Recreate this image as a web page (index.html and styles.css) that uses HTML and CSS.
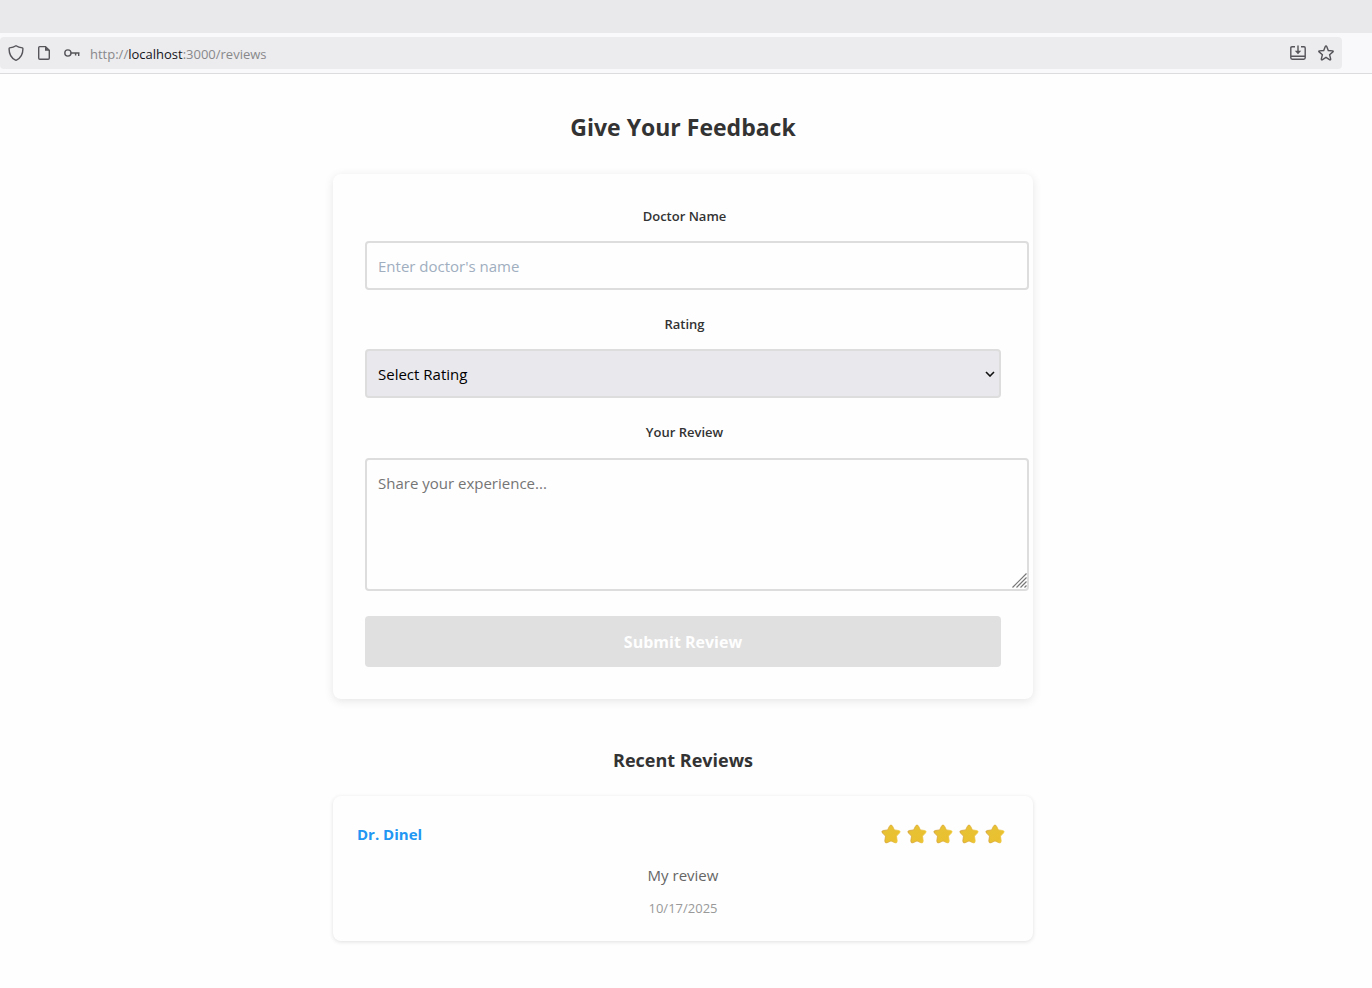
FILE: index.html
```html
<!DOCTYPE html>
<html lang="en">
<head>
<meta charset="utf-8">
<meta name="viewport" content="width=device-width, initial-scale=1">
<title>Reviews</title>
<link rel="stylesheet" href="styles.css">
</head>
<body>
<header>
  <div class="tabs"></div>
  <div class="toolbar">
    <div class="urlbar">
      <svg class="icon" viewBox="0 0 16 16"><path d="M8 .8C6.3 2 4 2.700 1.600 2.900C1.300 3 1.100 3.300 1.100 3.700C1 8.500 2.800 12.800 7.500 15.100Q8 15.300 8.500 15.100C13.200 12.800 15 8.500 14.900 3.700C14.900 3.300 14.700 3 14.400 2.900C12 2.700 9.700 2 8 .8Z"/></svg>
      <svg class="icon" viewBox="0 0 16 16"><path d="M3.700 1.600H9.500L13.300 5.400V13.100Q13.300 14.300 12.100 14.300H3.900Q2.700 14.300 2.700 13.100V2.800Q2.700 1.600 3.700 1.600Z"/><path class="solid" d="M9 1.500V5.700H13.300Z"/></svg>
      <svg class="icon" viewBox="0 0 16 16"><circle cx="3.900" cy="8" r="3.100"/><path d="M7 8H15.500M11.600 8V10.500M14.700 8V11"/></svg>
      <span class="url">http://<span class="host">localhost</span>:3000/reviews</span>
      <svg class="icon" viewBox="0 0 16 16"><path d="M5 1.800H2Q.8 1.800 .8 3V12.800Q.8 14.200 2.200 14.200H13.800Q15.200 14.200 15.200 12.800V3Q15.200 1.800 14 1.800H11M1 11.200H15M8 .5V7.500"/><path class="solid" d="M4.800 5.800H11.200L8 9.300Z"/></svg>
      <svg class="icon" viewBox="0 0 16 16"><path d="M8 .9Q8.500 .9 8.700 1.400L10.300 5.500L14.600 5.900Q15.700 6.100 14.900 6.900L11.600 9.700L12.700 14.100Q12.700 15.200 11.800 14.800L8 12.400L4.200 14.800Q3.300 15.200 3.300 14.100L4.400 9.700L1.100 6.900Q.3 6.100 1.400 5.900L5.700 5.500L7.300 1.400Q7.500 .9 8 .9Z"/></svg>
    </div>
  </div>
</header>
<main class="page">
  <h1 class="title">Give Your Feedback</h1>
  <form class="card form">
    <div class="field">
      <label for="doctor">Doctor Name</label>
      <input class="control wide" id="doctor" type="text" placeholder="Enter doctor's name">
    </div>
    <div class="field">
      <label for="rating">Rating</label>
      <div class="select-wrap">
        <select class="control select" id="rating"><option>Select Rating</option><option>5</option><option>4</option><option>3</option><option>2</option><option>1</option></select>
        <svg class="chevron" viewBox="0 0 10 6"><path d="M1 1L5 5L9 1"/></svg>
      </div>
    </div>
    <div class="field">
      <label for="review">Your Review</label>
      <div class="wide area-wrap">
        <textarea class="control area" id="review" placeholder="Share your experience..."></textarea>
        <svg class="grip" viewBox="0 0 15 15"><path d="M.5 14.500L14.500 .5M4.500 14.500L14.500 4.500M8.500 14.500L14.500 8.500M12.500 14.500L14.500 12.500"/></svg>
      </div>
    </div>
    <button class="submit" type="submit" disabled>Submit Review</button>
  </form>
  <h2 class="subtitle">Recent Reviews</h2>
  <article class="card review">
    <div class="review-head">
      <h3 class="doctor">Dr. Dinel</h3>
      <div class="stars" role="img" aria-label="5 of 5 stars">
        <svg viewBox="0 0 20 20"><use href="#star"/></svg>
        <svg viewBox="0 0 20 20"><use href="#star"/></svg>
        <svg viewBox="0 0 20 20"><use href="#star"/></svg>
        <svg viewBox="0 0 20 20"><use href="#star"/></svg>
        <svg viewBox="0 0 20 20"><use href="#star"/></svg>
      </div>
    </div>
    <p class="text">My review</p>
    <time class="date" datetime="2025-10-17">10/17/2025</time>
  </article>
</main>
<svg class="defs" width="0" height="0">
  <defs>
    <linearGradient id="gold" x1="0" y1="0" x2="1" y2="1"><stop offset="0" stop-color="#dfb02e"/><stop offset=".3" stop-color="#e8c234"/><stop offset=".75" stop-color="#e9c02f"/><stop offset="1" stop-color="#f5d03c"/></linearGradient>
    <linearGradient id="rim" x1="0" y1="0" x2="1" y2="0"><stop offset="0" stop-color="#d3a03c"/><stop offset=".6" stop-color="#e0b038"/><stop offset="1" stop-color="#f6d445"/></linearGradient>
    <path id="star" d="M10 1.100Q11.100 1.100 11.700 2.500L13.400 5.900L17.700 6.500Q20.200 7.100 18.500 9L15.500 12.100L16.200 16.900Q16.200 19.500 14 18.800L10 16.900L6 18.800Q3.800 19.500 3.800 16.900L4.500 12.100L1.500 9Q-.2 7.100 2.300 6.500L6.600 5.900L8.300 2.500Q8.900 1.100 10 1.100Z" fill="url(#gold)" stroke="url(#rim)" stroke-width=".8"/>
  </defs>
</svg>
</body>
</html>
```
FILE: styles.css
```css
* { box-sizing: border-box; }
body {
  margin: 0;
  background: #fefefe;
  color: #333;
  font-family: "Open Sans", "Noto Sans", sans-serif;
}
.tabs { height: 33px; background: #e9e9eb; }
.toolbar {
  padding: 4px 30px 4px 0;
  background: #f9f9fb;
  border-bottom: 1px solid #dcdcde;
}
.urlbar {
  display: flex;
  align-items: center;
  gap: 12px;
  height: 32px;
  padding: 0 8px;
  border-radius: 4px;
  background: #ececee;
}
.icon {
  width: 16px;
  height: 16px;
  fill: none;
  stroke: #55555a;
  stroke-width: 1.4;
}
.icon .solid { fill: #55555a; stroke: none; }
.url { flex: 1; margin-left: -2px; padding-top: 2px; font-size: 13px; color: #88888b; }
.host { color: #15141a; }
.page {
  max-width: 706px;
  margin: 0 auto;
  padding: 35px 6px 46px 0;
  text-align: center;
}
.title { margin: 0 0 29px; font-size: 23px; line-height: 36px; }
.card { border-radius: 8px; background: #fefefe; }
.form { padding: 32px; box-shadow: 0 2px 10px rgba(0, 0, 0, .1); }
.field { margin-bottom: 24px; }
.field label {
  display: block;
  margin-bottom: 15px;
  padding-left: 3px;
  font-size: 13px;
  font-weight: 600;
  line-height: 20px;
}
.control {
  display: block;
  width: 100%;
  height: 49px;
  padding: 12px 11px;
  border: 2px solid #ddd;
  border-radius: 4px;
  background: #fefefe;
  font: inherit;
  font-size: 15px;
}
.wide { width: calc(100% + 28px); }
.control::placeholder { color: #a0aec0; opacity: 1; }
.select-wrap, .area-wrap { position: relative; }
.area-wrap { margin: 16px 0 25px; }
.select { padding: 0 11px; appearance: none; background: #e9e9ed; color: #000; }
.chevron {
  position: absolute;
  right: 6px;
  top: 22px;
  width: 10px;
  height: 6px;
  fill: none;
  stroke: #111;
  stroke-width: 1.6;
  pointer-events: none;
}
.area { height: 133px; line-height: 22px; resize: none; }
.area.control::placeholder { color: #757575; }
.grip {
  position: absolute;
  right: 2px;
  bottom: 3px;
  width: 15px;
  height: 15px;
  stroke: #777;
  stroke-width: 1.2;
  pointer-events: none;
}
.submit {
  display: block;
  width: 100%;
  height: 51px;
  border: 0;
  border-radius: 4px;
  background: #e0e0e0;
  color: #fefefe;
  font: inherit;
  font-size: 16px;
  font-weight: 700;
}
.subtitle { margin: 47px 0 22px; font-size: 18px; line-height: 28px; }
.review { padding: 24px; box-shadow: 0 1px 4px rgba(0, 0, 0, .12); }
.review-head { display: flex; align-items: center; justify-content: space-between; height: 28px; }
.doctor { margin: 0; font-size: 15px; line-height: 22px; color: #2196f3; }
.stars { display: flex; gap: 6px; padding-right: 4px; }
.stars svg { width: 20px; height: 20px; }
.text { margin: 15px 0 12px; font-size: 15px; line-height: 24px; color: #666; }
.date { display: block; font-size: 13px; line-height: 18px; color: #999; }
.defs { position: absolute; }
```
